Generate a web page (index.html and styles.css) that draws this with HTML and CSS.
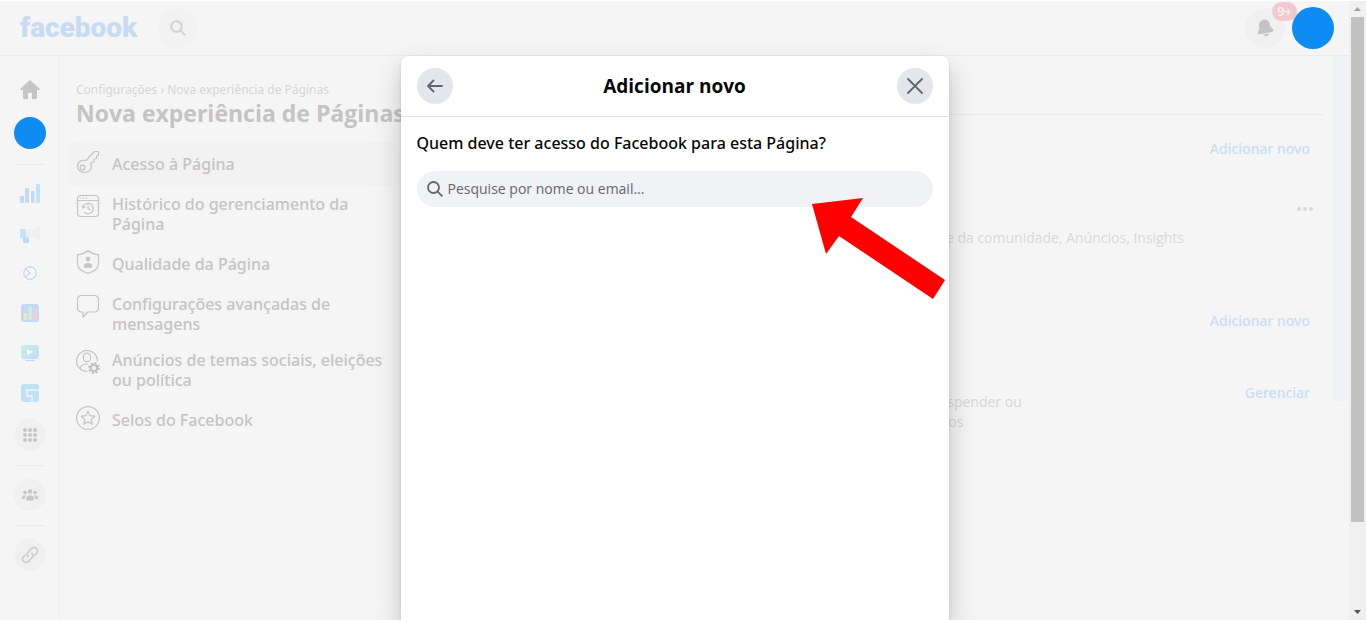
FILE: index.html
```html
<!DOCTYPE html>
<html lang="pt-BR">
<head>
<meta charset="UTF-8" />
<meta name="viewport" content="width=device-width, initial-scale=1" />
<title>Nova experiência de Páginas | Facebook</title>
<link rel="stylesheet" href="styles.css">
</head>
<body>

<div class="screen">
  <header class="topbar">
    <a class="logo" href="#">facebook</a>
    <button class="round search-btn" aria-label="Pesquisar">
      <svg width="16" height="16" viewBox="0 0 16 16" fill="none" stroke="#d2d2d2" stroke-width="2" stroke-linecap="round"><circle cx="6.5" cy="6.5" r="5.3"/><path d="M10.5 10.5l4.3 4.3"/></svg>
    </button>
    <div class="account">
      <button class="round" aria-label="Notificações">
        <svg width="20" height="20" viewBox="0 0 20 20" fill="#c4c4c4"><g transform="rotate(-11 10 10)"><path d="M10 1.5c3.200 0 5.500 2.300 5.500 5.500 0 2.800.6 3.900 1.900 5.100 1.200 1.200.5 3.100-1.200 3.100H3.800c-1.700 0-2.400-1.900-1.200-3.100C3.900 10.900 4.500 9.800 4.500 7c0-3.200 2.300-5.500 5.500-5.500z"/><path d="M7 16.200h6c-.5 1.300-1.500 2-3 2s-2.500-.7-3-2z"/></g></svg>
        <span class="badge">9+</span>
      </button>
      <button class="avatar avatar-lg" aria-label="Conta"></button>
    </div>
  </header>

  <div class="layout">
    <aside class="rail">
      <a href="#" aria-label="Início"><svg width="20" height="20" viewBox="0 0 20 20" fill="#c6c6c6"><path d="M10 0l9.700 8.800c.5.5.3 1.200-.4 1.200H17v8c0 .7-.4 1-1 1h-4v-5.500c0-.4-.2-.5-.5-.5h-3c-.3 0-.5.100-.5.500V19H4c-.6 0-1-.3-1-1v-8H.7c-.7 0-.9-.7-.4-1.200z"/></svg></a>
      <a class="avatar avatar-sm" href="#" aria-label="Perfil"></a>
      <hr>
      <div class="apps">
        <a href="#" aria-label="Insights"><svg width="20" height="20" viewBox="0 0 20 20" fill="#c3daf3"><rect x="0" y="13" width="4" height="7" rx="1"/><rect x="5" y="5" width="4" height="15" rx="1"/><rect x="11" y="8" width="3.500" height="12" rx="1"/><rect x="16" y="1" width="4" height="19" rx="1" fill="#c3e2f5"/></svg></a>
        <a href="#" aria-label="Anúncios"><svg width="20" height="20" viewBox="0 0 20 20"><path d="M6 7c6 0 10-1 14-5v16c-4-3-8-4-14-4z" fill="#efefef"/><path d="M1 6h5v9H2c-1.500 0-2-.5-2-2V7c0-.7.300-1 1-1z" fill="#c4e3f5"/><path d="M3 14.500h6V20H4.500C3.500 20 3 19 3 18z" fill="#bcdaf4"/></svg></a>
        <a href="#" aria-label="Central de anúncios"><svg width="20" height="20" viewBox="0 0 20 20" fill="none" stroke="#c4d9f4" stroke-width="1.400"><circle cx="10" cy="10" r="9.500" fill="#f8f8f8" stroke="#f0f0f0" stroke-width="1"/><circle cx="10" cy="10" r="6.300"/><path d="M5 5.500l5 4.500-5 4.500"/></svg></a>
        <a href="#" aria-label="Gerenciador"><svg width="20" height="20" viewBox="0 0 20 20"><rect x="1" y="1" width="18" height="18" rx="3" fill="#c6d7f2"/><rect x="3.500" y="10" width="3.500" height="7" rx="1" fill="#f4e3c0"/><rect x="8.500" y="3.500" width="3.500" height="13.500" rx="1" fill="#c9efe2"/><rect x="13.500" y="6" width="3.500" height="11" rx="1" fill="#f2cbdc"/></svg></a>
        <a href="#" aria-label="Vídeos"><svg width="20" height="20" viewBox="0 0 20 20"><defs><linearGradient id="tv" x2="1" y2="1"><stop stop-color="#c8efe6"/><stop offset="1" stop-color="#c2daf7"/></linearGradient></defs><rect x="1" y="2" width="18" height="14" rx="3" fill="url(#tv)"/><path d="M7 6l6 3-6 3.200z" fill="#f8f8f8"/><path d="M5 17.500h10" stroke="#bcd6f8" stroke-width="1.200"/></svg></a>
        <a href="#" aria-label="Jogos"><svg width="20" height="20" viewBox="0 0 20 20"><rect x="1" y="1" width="18" height="18" rx="3" fill="#c0e1f3"/><path d="M19 7H7v6h5v6" fill="none" stroke="#f5f5f5" stroke-width="1.300"/></svg></a>
      </div>
      <a class="round round-sm" href="#" aria-label="Todos os apps"><svg width="14" height="14" viewBox="0 0 14 14" fill="#c6c6c6"><circle cx="2" cy="2" r="2"/><circle cx="7" cy="2" r="2"/><circle cx="12" cy="2" r="2"/><circle cx="2" cy="7" r="2"/><circle cx="7" cy="7" r="2"/><circle cx="12" cy="7" r="2"/><circle cx="2" cy="12" r="2"/><circle cx="7" cy="12" r="2"/><circle cx="12" cy="12" r="2"/></svg></a>
      <hr>
      <a class="round round-sm" href="#" aria-label="Grupos"><svg width="16" height="12" viewBox="0 0 16 12" fill="#c6c6c6"><circle cx="8" cy="2.500" r="2.300"/><circle cx="3" cy="3.500" r="1.800"/><circle cx="13" cy="3.500" r="1.800"/><path d="M4 10c0-2.500 1.600-3.800 4-3.800s4 1.300 4 3.800c0 1-.4 1.400-1.200 1.400H5.200C4.400 11.400 4 11 4 10zM3.800 6.300C3.100 7.200 2.900 8.500 2.900 10H1C.3 10 0 9.600 0 8.900c0-1.800 1.500-3 3.800-2.600zM12.200 6.300c.7.900.9 2.200.9 3.700H15c.7 0 1-.4 1-1.100 0-1.800-1.500-3-3.800-2.600z"/></svg></a>
      <hr>
      <a class="round round-sm" href="#" aria-label="Links"><svg width="18" height="18" viewBox="0 0 18 18" fill="none" stroke="#cbcbcb" stroke-width="1.600" stroke-linecap="round"><path d="M7.300 10.700a3.300 3.300 0 0 1 0-4.700l3.400-3.500a3.300 3.300 0 0 1 4.800 4.800l-2 2"/><path d="M10.700 7.300a3.300 3.300 0 0 1 0 4.700l-3.400 3.500a3.300 3.300 0 0 1-4.800-4.800l2-2"/></svg></a>
    </aside>

    <nav class="settings">
      <p class="crumbs">Configurações › Nova experiência de Páginas</p>
      <h1>Nova experiência de Páginas</h1>
      <ul>
        <li><a class="active" href="#">
          <svg width="24" height="24" viewBox="0 0 24 24" fill="none" stroke="#c4c4c4" stroke-width="1.200" stroke-linejoin="round"><path d="M10 10.500L18.500 1.500H22.500V5.500L20.500 6V8.500L18 9V11.500L14.500 13.500C17 18.500 13 22.500 9 22.500 5 22.500 1.500 20 1.500 16 1.500 12 5.500 9.500 10 10.500z"/><circle cx="6.500" cy="17.500" r="2.300"/></svg>
          <span>Acesso à Página</span></a></li>
        <li><a href="#">
          <svg width="24" height="24" viewBox="0 0 24 24" fill="none" stroke="#c4c4c4" stroke-width="1.200" stroke-linecap="round"><rect x="1.500" y="1.500" width="21" height="21" rx="3"/><path d="M1.500 6.500h21M4 4h.5M7 4h.5M10 4h.5"/><path d="M7 13.500a5.200 5.200 0 1 1 1.500 4.800M6 12l1 2 2-1M12 11.500v3l2 1"/></svg>
          <span>Histórico do gerenciamento da Página</span></a></li>
        <li><a href="#">
          <svg width="24" height="24" viewBox="0 0 24 24" fill="none" stroke="#c4c4c4" stroke-width="1.200" stroke-linejoin="round"><path d="M12 .7C9 3 5 4.500 1.500 4.800V13c0 5.200 4.500 8.800 10.500 10.300C18 21.800 22.500 18.200 22.500 13V4.800C19 4.500 15 3 12 .7z"/><circle cx="12" cy="9" r="2.200" fill="#c4c4c4" stroke="none"/><path d="M7.700 16.500c0-2.300 2-3.500 4.300-3.500s4.300 1.200 4.300 3.500c0 .7-.4 1.200-1 1.200H8.700c-.6 0-1-.5-1-1.200z" fill="#c4c4c4" stroke="none"/></svg>
          <span>Qualidade da Página</span></a></li>
        <li><a href="#">
          <svg width="24" height="24" viewBox="0 0 24 24" fill="none" stroke="#c4c4c4" stroke-width="1.200" stroke-linejoin="round"><path d="M6 1.500h12c2.800 0 4.500 1.700 4.500 4.500v7.500c0 2.800-1.700 4.500-4.500 4.500h-6l-5 5v-5H6c-2.800 0-4.500-1.700-4.500-4.500V6c0-2.800 1.700-4.500 4.500-4.500z"/></svg>
          <span>Configurações avançadas de mensagens</span></a></li>
        <li><a href="#">
          <svg width="24" height="24" viewBox="0 0 24 24" fill="none" stroke="#c4c4c4" stroke-width="1.200" stroke-linecap="round"><path d="M11 21.500A10.500 10.500 0 1 1 21.500 11"/><ellipse cx="11" cy="7.500" rx="3.700" ry="4.300"/><path d="M4 18.500c.8-3.200 3.300-4.500 7.500-4.500"/><circle cx="18" cy="18" r="3.300" stroke-width="2.400"/><circle cx="18" cy="18" r="5" stroke-width="2" stroke-dasharray="1.960 1.960" stroke-linecap="butt"/></svg>
          <span>Anúncios de temas sociais, eleições ou política</span></a></li>
        <li><a href="#">
          <svg width="24" height="24" viewBox="0 0 24 24" fill="none" stroke="#c4c4c4" stroke-width="1.200" stroke-linejoin="round"><circle cx="12" cy="12" r="11.400"/><path d="M12 5.200l2 4.500 4.800.5-3.600 3.300 1 4.800-4.200-2.500-4.200 2.500 1-4.800-3.600-3.300 4.800-.5z"/></svg>
          <span>Selos do Facebook</span></a></li>
      </ul>
    </nav>

    <main class="content">
      <div class="content-head"></div>
      <section class="people">
        <a href="#">Adicionar novo</a>
        <button class="more" aria-label="Mais opções"><svg width="16" height="4" viewBox="0 0 16 4" fill="#d8d8d8"><circle cx="2" cy="2" r="2"/><circle cx="8" cy="2" r="2"/><circle cx="14" cy="2" r="2"/></svg></button>
        <p>Atividade da comunidade, Anúncios, Insights</p>
      </section>
      <section class="tasks">
        <a href="#">Adicionar novo</a>
      </section>
      <section class="manage">
        <p>suspender ou<br>anos</p>
        <a href="#">Gerenciar</a>
      </section>
    </main>
    <div class="gutter"></div>
  </div>

  <div class="modal" role="dialog" aria-labelledby="modalTitle">
    <div class="modal-head">
      <button class="modal-btn" aria-label="Voltar"><svg width="20" height="20" viewBox="0 0 20 20" fill="none" stroke="#606770" stroke-width="1.800" stroke-linecap="round" stroke-linejoin="round"><path d="M17 10H3M8.500 4.500L3 10l5.500 5.500"/></svg></button>
      <h2 id="modalTitle">Adicionar novo</h2>
      <button class="modal-btn" aria-label="Fechar"><svg width="20" height="20" viewBox="0 0 20 20" fill="none" stroke="#606770" stroke-width="1.800" stroke-linecap="round"><path d="M3 3l14 14M17 3L3 17"/></svg></button>
    </div>
    <div class="modal-body">
      <label for="person">Quem deve ter acesso do Facebook para esta Página?</label>
      <div class="search">
        <svg width="16" height="16" viewBox="0 0 16 16" fill="none" stroke="#65676b" stroke-width="1.800" stroke-linecap="round"><circle cx="6.500" cy="6.500" r="5.500"/><path d="M10.700 10.700l4.100 4.100"/></svg>
        <input id="person" type="text" placeholder="Pesquise por nome ou email...">
      </div>
    </div>
    <svg class="pointer" width="133" height="101" viewBox="0 0 133 101" fill="#ff0000"><path d="M0 6L51 0 39 19 133 82 121 101 27 38 14 56z"/></svg>
  </div>
</div>

<div class="scrollbar" aria-hidden="true">
  <svg width="17" height="16" viewBox="0 0 17 16" fill="#a3a3a3"><path d="M5 10l3.500-4 3.500 4z"/></svg>
  <div class="track"><div class="thumb"></div></div>
  <svg width="17" height="16" viewBox="0 0 17 16" fill="#505050"><path d="M5 6l3.500 4L12 6z"/></svg>
</div>

</body>
</html>
```
FILE: styles.css
```css
* {
  box-sizing: border-box;
}
body {
  margin: 0;
  height: 100vh;
  display: flex;
  overflow: hidden;
  background: #f5f5f5;
  border-top: 1px solid #fff;
  border-bottom: 1px solid #fff;
  font-family: "Open Sans", "Noto Sans", sans-serif;
  font-size: 14px;
  line-height: 20px;
  color: #c4c4c4;
}
a {
  color: inherit;
  text-decoration: none;
}
button {
  border: none;
  padding: 0;
  background: none;
  font: inherit;
  cursor: pointer;
}
svg {
  display: block;
  flex: none;
}
h1, h2, p, ul {
  margin: 0;
  padding: 0;
}
.screen {
  flex: 1;
  min-width: 0;
  position: relative;
  display: flex;
  flex-direction: column;
}

/* Barra superior */
.topbar {
  flex: none;
  height: 55px;
  display: flex;
  align-items: center;
  padding: 0 15px 0 20px;
  border-bottom: 1px solid #ebebeb;
}
.logo {
  font-family: Roboto, sans-serif;
  font-size: 28px;
  font-weight: 900;
  line-height: 32px;
  color: #c9dbf4;
}
.round {
  position: relative;
  width: 40px;
  height: 40px;
  border-radius: 50%;
  background: #f0f0f0;
  display: flex;
  align-items: center;
  justify-content: center;
}
.round-sm {
  width: 32px;
  height: 32px;
}
.search-btn {
  margin-left: 21px;
  background: #f2f2f2;
}
.account {
  margin-left: auto;
  display: flex;
  align-items: center;
  gap: 7px;
}
.badge {
  position: absolute;
  top: -6px;
  right: -12px;
  padding: 0 5px;
  border-radius: 10px;
  background: #f2c9cf;
  color: #f9f4f4;
  font-size: 13px;
  line-height: 19px;
  font-weight: 600;
}
.avatar {
  border-radius: 50%;
  background: #0f8bf4;
}
.avatar-lg {
  width: 42px;
  height: 42px;
}
.avatar-sm {
  width: 32px;
  height: 32px;
  margin: 17px 0 1px;
}

.layout {
  flex: 1;
  min-height: 0;
  display: flex;
}

/* Coluna de atalhos */
.rail {
  flex: none;
  width: 60px;
  padding-top: 24px;
  border-right: 1px solid #ededed;
  display: flex;
  flex-direction: column;
  align-items: center;
}
.rail hr {
  width: 28px;
  margin: 14px 0 13px;
  border: none;
  border-top: 1px solid #e9e9e9;
}
.apps {
  display: flex;
  flex-direction: column;
  gap: 20px;
  margin: 5px 0 16px;
}

/* Menu de configurações */
.settings {
  flex: none;
  width: 348px;
  padding: 24px 8px 0;
}
.crumbs {
  padding-left: 8px;
  font-family: "Noto Sans", sans-serif;
  font-size: 12px;
  color: #d5d5d5;
}
.settings h1 {
  padding-left: 8px;
  font-size: 23px;
  line-height: 26px;
  font-weight: 700;
  white-space: nowrap;
}
.settings ul {
  margin-top: 16px;
  list-style: none;
}
.settings li a {
  display: flex;
  align-items: center;
  gap: 12px;
  min-height: 44px;
  padding: 8px;
  border-radius: 8px;
  font-family: "Noto Sans", sans-serif;
  font-size: 16px;
  font-weight: 500;
}
.settings li svg {
  align-self: flex-start;
}
.settings .active {
  background: #f2f2f2;
}

/* Conteúdo */
.content {
  flex: 1;
  padding: 0 10px 0 0;
  color: #d8d8d8;
}
.content a {
  color: #cbdcf5;
  font-family: "Noto Sans", sans-serif;
  font-weight: 500;
}
.content-head {
  height: 59px;
  border-bottom: 1px solid #e9e9e9;
}
.content section {
  padding-right: 13px;
}
.people {
  padding-top: 24px;
  display: flex;
  flex-direction: column;
  align-items: flex-end;
}
.more {
  width: 16px;
  height: 20px;
  margin: 40px -3px 9px 0;
  display: flex;
  align-items: center;
}
.people p {
  padding-right: 126px;
}
.tasks {
  padding-top: 63px;
  text-align: right;
}
.manage {
  padding-top: 52px;
  display: flex;
  justify-content: flex-end;
}
.manage p {
  margin: 9px 223px 0 0;
}
.gutter {
  flex: none;
  width: 16px;
  height: 345px;
  background: #eff1f5;
}

/* Janela */
.modal {
  position: absolute;
  top: 55px;
  bottom: 0;
  left: 50%;
  width: 548px;
  transform: translateX(-50%);
  border-radius: 8px 8px 0 0;
  background: #fff;
  color: #080809;
  box-shadow: 0 12px 28px rgba(0,0,0,0.2), 0 2px 4px rgba(0,0,0,0.1);
}
.modal-head {
  display: flex;
  align-items: center;
  justify-content: space-between;
  padding: 12px 16px;
  border-bottom: 1px solid #e0e1e3;
}
.modal-head h2 {
  font-size: 19px;
  line-height: 24px;
  font-weight: 700;
}
.modal-btn {
  width: 36px;
  height: 36px;
  border-radius: 50%;
  background: #e4e6eb;
  display: flex;
  align-items: center;
  justify-content: center;
}
.modal-body {
  padding: 16px;
}
.modal-body label {
  display: block;
  font-family: "Noto Sans", sans-serif;
  font-size: 16px;
  font-weight: 500;
}
.search {
  display: flex;
  align-items: center;
  gap: 5px;
  height: 36px;
  margin-top: 18px;
  padding: 0 10px;
  border-radius: 18px;
  background: #f0f2f5;
}
.search input {
  flex: 1;
  min-width: 0;
  border: none;
  padding: 0;
  outline: none;
  background: none;
  font: inherit;
}
.search input::placeholder {
  color: #65676b;
  opacity: 1;
}
/* Seta sobre o campo de pesquisa */
.pointer {
  position: absolute;
  top: 142px;
  right: 4px;
}

/* Barra de rolagem */
.scrollbar {
  flex: none;
  width: 17px;
  display: flex;
  flex-direction: column;
  background: #f0f0f0;
}
.track {
  flex: 1;
  padding: 0 2px;
}
.thumb {
  height: 86%;
  background: #c1c1c1;
}
```
